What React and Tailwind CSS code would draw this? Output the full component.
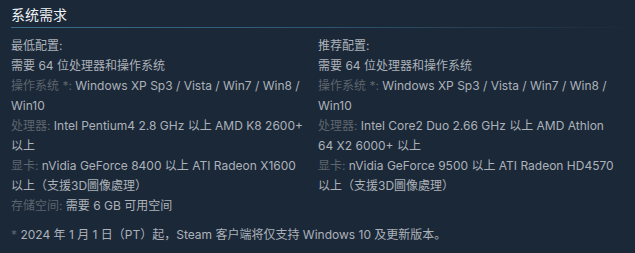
const minReq = [
  { value: '需要 64 位处理器和操作系统' },
  { label: '操作系统 *:', value: 'Windows XP Sp3 / Vista / Win7 / Win8 / Win10' },
  { label: '处理器:', value: 'Intel Pentium4 2.8 GHz 以上 AMD K8 2600+ 以上' },
  { label: '显卡:', value: 'nVidia GeForce 8400 以上 ATI Radeon X1600 以上（支援3D圖像處理）' },
  { label: '存储空间:', value: '需要 6 GB 可用空间' },
];

const recReq = [
  { value: '需要 64 位处理器和操作系统' },
  { label: '操作系统 *:', value: 'Windows XP Sp3 / Vista / Win7 / Win8 / Win10' },
  { label: '处理器:', value: 'Intel Core2 Duo 2.66 GHz 以上 AMD Athlon 64 X2 6000+ 以上' },
  { label: '显卡:', value: 'nVidia GeForce 9500 以上 ATI Radeon HD4570 以上（支援3D圖像處理）' },
];

function ReqList({ title, items }) {
  return (
    <div>
      <div className="text-[#acb2b8]">{title}</div>
      <ul>
        {items.map((it, i) => (
          <li key={i}>
            {it.label && <span className="text-[#5d656d]">{it.label} </span>}
            <span className="text-[#acb2b8]">{it.value}</span>
          </li>
        ))}
      </ul>
    </div>
  );
}

export default function App() {
  return (
    <div
      className="w-[635px] h-[253px] bg-[#1b2838] pl-[11px] pr-[15px] pt-[6px] text-[12px] leading-[20px]"
      style={{ fontFamily: 'Inter, "Noto Sans CJK SC", sans-serif' }}
    >
      <h2 className="text-[14px] leading-[18px] text-[#f0f3f5]">系统需求</h2>
      <div className="h-px mt-[3px] -mr-[15px] bg-gradient-to-r from-[#3b6e8c] via-[#2f5672] to-transparent" />
      <div className="grid grid-cols-[300px_1fr] gap-x-[7px] mt-[8px]">
        <ReqList title="最低配置:" items={minReq} />
        <ReqList title="推荐配置:" items={recReq} />
      </div>
      <p className="mt-[9px] text-[#acb2b8]">
        <span className="text-[#5d656d]">* </span>
        2024 年 1 月 1 日（PT）起，Steam 客户端将仅支持 Windows 10 及更新版本。
      </p>
    </div>
  );
}
